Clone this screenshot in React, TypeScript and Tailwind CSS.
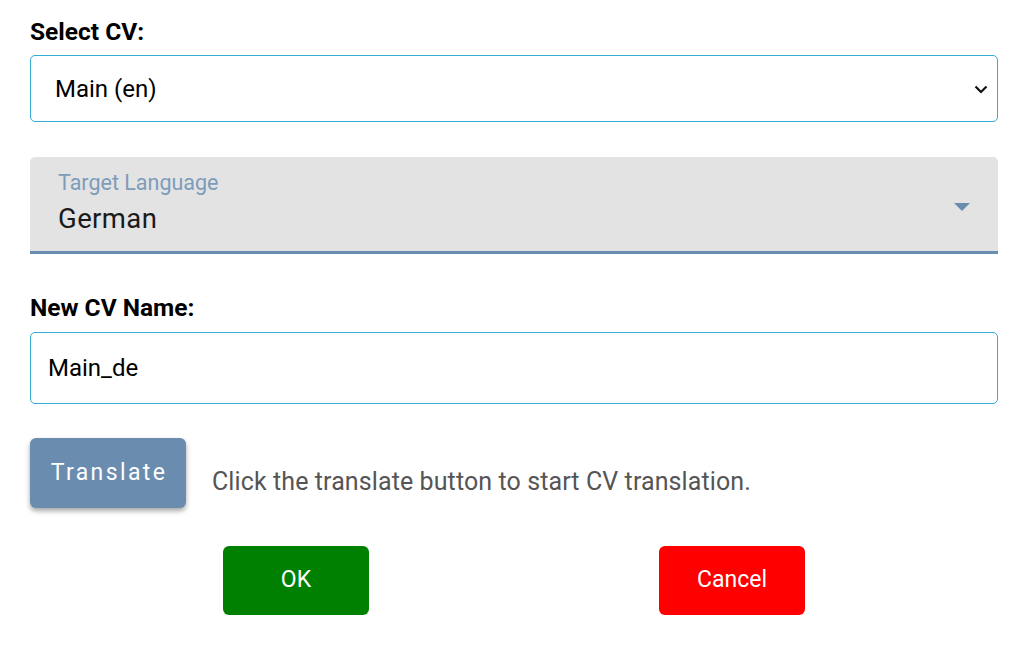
import { useState } from 'react';

const LANGUAGES = ['English', 'German', 'French', 'Spanish', 'Italian'];

export default function App() {
  const [cv, setCv] = useState('main-en');
  const [language] = useState('German');
  const [name, setName] = useState('Main_de');

  return (
    <div
      className="min-h-screen bg-white pl-[30px] pr-[26px] pt-[18px] text-black"
      style={{ fontFamily: 'Roboto, "Liberation Sans", sans-serif' }}
    >
      {/* Select CV */}
      <label className="block text-[24.5px] font-bold leading-[28px]">Select CV:</label>
      <div className="relative mt-[9px]">
        <select
          value={cv}
          onChange={(e) => setCv(e.target.value)}
          className="h-[67px] w-full appearance-none rounded-[5px] border border-[#35acd2] bg-white pl-[24px] text-[24px] text-black focus:outline-none"
        >
          <option value="main-en">Main (en)</option>
        </select>
        <svg
          className="pointer-events-none absolute right-[10px] top-[30px]"
          width="14"
          height="9"
          viewBox="0 0 14 9"
        >
          <path d="M1.5 1.5 L7 7 L12.5 1.5" fill="none" stroke="#111" strokeWidth="2.2" />
        </svg>
      </div>

      {/* Target language */}
      <div className="relative mt-[35px] h-[97px] rounded-t-[5px] border-b-[3px] border-[#6a8caf] bg-[#e3e3e3] pl-[28px] pt-[14px]">
        <div className="text-[21.5px] leading-[24px] text-[#7c9cba]">Target Language</div>
        <div className="mt-[6px] text-[27.5px] leading-[36px] tracking-[0.4px] text-[#1a1a1a]">
          {LANGUAGES.find((l) => l === language)}
        </div>
        <svg
          className="absolute right-[28px] top-[46px]"
          width="16"
          height="8"
          viewBox="0 0 16 8"
        >
          <path d="M0 0 H16 L8 8 Z" fill="#6a8caf" />
        </svg>
      </div>

      {/* New CV name */}
      <label className="mt-[40px] block text-[24.5px] font-bold leading-[28px]">New CV Name:</label>
      <input
        value={name}
        onChange={(e) => setName(e.target.value)}
        className="mt-[10px] block h-[72px] w-full rounded-[5px] border border-[#35acd2] bg-white pl-[17px] text-[24px] text-black focus:outline-none"
      />

      {/* Translate */}
      <div className="mt-[34px] flex items-start gap-[26px]">
        <button className="h-[70px] w-[156px] rounded-[6px] bg-[#6a8caf] pl-[2px] text-[23px] tracking-[2.4px] text-white shadow-[0_3px_5px_rgba(0,0,0,0.35)]">
          Translate
        </button>
        <p className="pt-[29px] text-[25px] leading-[30px] tracking-[0.1px] text-[#555555]">
          Click the translate button to start CV translation.
        </p>
      </div>

      {/* Actions */}
      <div className="mt-[38px] flex justify-center gap-[290px]">
        <button className="h-[69px] w-[146px] rounded-[6px] bg-[#008000] text-[23px] text-white">
          OK
        </button>
        <button className="h-[69px] w-[146px] rounded-[6px] bg-[#ff0000] text-[23px] text-white">
          Cancel
        </button>
      </div>
    </div>
  );
}
